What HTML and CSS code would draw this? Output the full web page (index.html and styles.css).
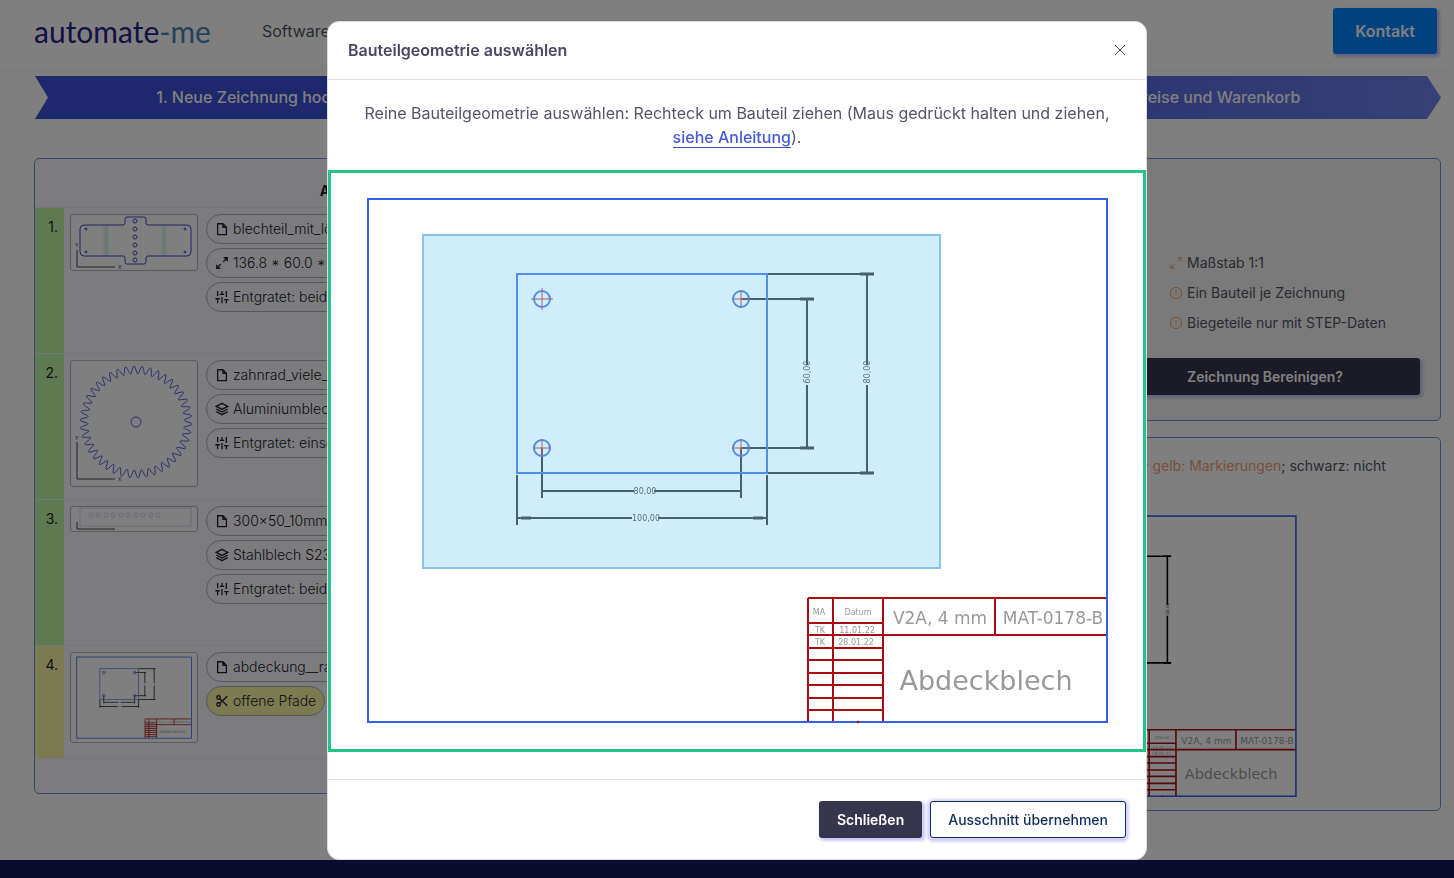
FILE: index.html
```
<!DOCTYPE html>
<html lang="de">
<head>
  <meta charset="UTF-8" />
  <meta name="viewport" content="width=device-width, initial-scale=1.0" />
  <title>automate-me</title>
  <link rel="stylesheet" href="styles.css">
</head>
<body>
  <!-- shared icons -->
  <svg class="sprite" aria-hidden="true">
    <symbol id="icon-file" viewBox="0 0 16 16">
      <path d="M3 2h6l4 4v8.500H3z M9 2v4h4" />
    </symbol>
    <symbol id="icon-expand" viewBox="0 0 16 16">
      <path d="M10 2h4v4 M14 2L9.500 6.500 M6 14H2v-4 M2 14L6.500 9.500" />
    </symbol>
    <symbol id="icon-layers" viewBox="0 0 16 16">
      <path d="M8 1.500L14.500 5 8 8.500 1.500 5z M1.500 8L8 11.500 14.500 8 M1.500 11L8 14.500 14.500 11" />
    </symbol>
    <symbol id="icon-sliders" viewBox="0 0 16 16">
      <path d="M3 15v-5 M3 7V1 M8 15V8 M8 5V1 M13 15v-4 M13 8V1 M0.500 10h5 M5.500 5h5 M10.500 11h5" />
    </symbol>
    <symbol id="icon-scissors" viewBox="0 0 16 16">
      <circle cx="4" cy="4" r="2" /><circle cx="4" cy="12" r="2" />
      <path d="M5.500 5.500L14 13.500 M5.500 10.500L14 2.500" />
    </symbol>
    <symbol id="icon-alert" viewBox="0 0 16 16">
      <circle cx="8" cy="8" r="6.500" />
      <path d="M8 4.500v4 M8 10.500v1" />
    </symbol>
  </svg>

  <header class="site-header">
    <a class="logo" href="#">automate<span>-me</span></a>
    <nav><a href="#">Software</a></nav>
    <button class="btn btn-contact" type="button">Kontakt</button>
  </header>

  <main>
    <ol class="steps">
      <li>1. Neue Zeichnung hochladen</li>
      <li>2. Konfigurieren</li>
      <li>3. Preise und Warenkorb</li>
    </ol>

    <div class="columns">
      <section class="card parts">
        <table>
          <thead>
            <tr><th colspan="3">Aktuelle Bestellung</th></tr>
          </thead>
          <tbody>
            <tr>
              <td class="num">1.</td>
              <td class="thumb">
                <svg viewBox="0 0 126 55">
                  <path class="bend" d="M35 10v31 M93 10v31" />
                  <path class="outline" d="M13 10H52Q54 10 54 8V4Q54 2 56 2H73Q75 2 75 4V8Q75 10 77 10H116Q120 10 120 14V37Q120 41 116 41H77Q75 41 75 43V47Q75 49 73 49H56Q54 49 54 47V43Q54 41 52 41H13Q9 41 9 37V14Q9 10 13 10z" />
                  <g class="outline">
                    <circle cx="15" cy="14" r="1" /><circle cx="15" cy="37" r="1" />
                    <circle cx="114" cy="14" r="1" /><circle cx="114" cy="37" r="1" />
                    <circle cx="64" cy="6" r="2" /><circle cx="64" cy="14" r="2" /><circle cx="64" cy="22" r="2" />
                    <circle cx="64" cy="30" r="2" /><circle cx="64" cy="38" r="2" /><circle cx="64" cy="45" r="2" />
                  </g>
                  <path class="axis" d="M6 35V52H44" />
                  <text x="4" y="32">Y</text><text x="47" y="54">X</text>
                </svg>
              </td>
              <td>
                <ul class="badges">
                  <li><svg><use href="#icon-file" /></svg>blechteil_mit_löchern.step</li>
                  <li><svg><use href="#icon-expand" /></svg>136.8 * 60.0 * 2.0 mm</li>
                  <li><svg><use href="#icon-sliders" /></svg>Entgratet: beidseitig</li>
                </ul>
              </td>
            </tr>
            <tr>
              <td class="num">2.</td>
              <td class="thumb">
                <svg viewBox="0 0 126 125">
                  <path class="gear" id="gear" />
                  <circle class="gear" cx="65" cy="61" r="5" />
                  <path class="axis" d="M6 81V118H44" />
                  <text x="4" y="79">Y</text><text x="47" y="120">X</text>
                </svg>
              </td>
              <td>
                <ul class="badges">
                  <li><svg><use href="#icon-file" /></svg>zahnrad_viele_zaehne.dxf</li>
                  <li><svg><use href="#icon-layers" /></svg>Aluminiumblech</li>
                  <li><svg><use href="#icon-sliders" /></svg>Entgratet: einseitig</li>
                </ul>
              </td>
            </tr>
            <tr>
              <td class="num">3.</td>
              <td class="thumb">
                <svg viewBox="0 0 126 24">
                  <rect class="pale" x="9" y="1" width="111" height="18" />
                  <g class="pale">
                    <circle cx="20" cy="8" r="2" /><circle cx="27" cy="8" r="2" /><circle cx="35" cy="8" r="2" />
                    <circle cx="42" cy="8" r="2" /><circle cx="50" cy="8" r="2" /><circle cx="57" cy="8" r="2" />
                    <circle cx="65" cy="8" r="2" /><circle cx="72" cy="8" r="2" /><circle cx="80" cy="8" r="2" />
                    <circle cx="87" cy="8" r="2" />
                  </g>
                  <path class="axis" d="M6 15V22H44" />
                </svg>
              </td>
              <td>
                <ul class="badges">
                  <li><svg><use href="#icon-file" /></svg>300×50_10mm.dxf</li>
                  <li><svg><use href="#icon-layers" /></svg>Stahlblech S235</li>
                  <li><svg><use href="#icon-sliders" /></svg>Entgratet: beidseitig</li>
                </ul>
              </td>
            </tr>
            <tr class="open">
              <td class="num">4.</td>
              <td class="thumb">
                <svg viewBox="-37 -26 812 575"><use href="#drawing" /></svg>
              </td>
              <td>
                <ul class="badges">
                  <li><svg><use href="#icon-file" /></svg>abdeckung__rahmen.dxf</li>
                  <li class="warn"><svg><use href="#icon-scissors" /></svg>offene Pfade</li>
                </ul>
              </td>
            </tr>
          </tbody>
        </table>
      </section>

      <div class="side">
        <section class="card hints">
          <ul>
            <li><svg><use href="#icon-expand" /></svg>Maßstab 1:1</li>
            <li><svg><use href="#icon-alert" /></svg>Ein Bauteil je Zeichnung</li>
            <li><svg><use href="#icon-alert" /></svg>Biegeteile nur mit STEP-Daten</li>
          </ul>
          <button class="btn btn-dark" type="button">Zeichnung Bereinigen?</button>
        </section>
        <section class="card preview">
          <p>blau: äußere und innere Schneidkontur; rot: Gravur; <span>gelb: Markierungen</span>; schwarz: nicht<br>erkannt</p>
          <svg viewBox="-2 -2 743 527"><use href="#drawing" /></svg>
        </section>
      </div>
    </div>
  </main>

  <footer class="site-footer"></footer>

  <div class="backdrop">
    <div class="modal" role="dialog" aria-labelledby="modal-title">
      <div class="modal-header">
        <h2 id="modal-title">Bauteilgeometrie auswählen</h2>
        <button class="close" type="button" aria-label="Schließen">
          <svg viewBox="0 0 12 12"><path d="M1 1l10 10 M11 1L1 11" /></svg>
        </button>
      </div>
      <div class="modal-body">
        <p>Reine Bauteilgeometrie auswählen: Rechteck um Bauteil ziehen (Maus gedrückt halten und ziehen, <a href="#">siehe Anleitung</a>).</p>
        <div class="canvas">
          <svg viewBox="-37 -26 812 576">
            <g id="drawing">
              <g class="dim">
                <path d="M373 100H446 M373 249H446 M439 100V166 M439 186V249" />
                <path d="M399 75H506 M399 274H506 M499 75V166 M499 186V274" />
                <path d="M174 249V299 M373 249V299 M174 292H266 M286 292H373" />
                <path d="M149 276V326 M399 276V326 M149 319H264 M290 319H399" />
                <path class="dim-bold" d="M432 100H446 M432 249H446 M492 75H506 M492 274H506 M153 319H163 M385 319H395" />
                <text x="277" y="295">80,00</text>
                <text x="278" y="322">100,00</text>
                <text transform="translate(442 173) rotate(-90)">60,00</text>
                <text transform="translate(502 173) rotate(-90)">80,00</text>
              </g>
              <g class="part">
                <rect x="149" y="75" width="250" height="199" />
                <circle cx="174" cy="100" r="8" />
                <circle cx="373" cy="100" r="8" />
                <circle cx="174" cy="249" r="8" />
                <circle cx="373" cy="249" r="8" />
              </g>
              <path class="cross" d="M163 100H185 M174 89V111 M364 100H382 M373 91V109 M165 249H183 M174 240V258 M364 249H382 M373 240V258" />
              <path class="title-grid" d="M440 399H739 M440 424H515 M440 436H739 M440 449H515 M440 461H515 M440 474H515 M440 486H515 M440 499H515 M440 511H515 M440 399V523 M465 399V523 M515 399V523 M627 399V436" />
              <rect class="frame" x="0" y="0" width="739" height="523" />
              <circle class="dot" cx="490" cy="523" r="1" />
              <g class="notes">
                <text x="451" y="416">MA</text>
                <text x="490" y="416">Datum</text>
                <text x="452" y="434">TK</text>
                <text x="489" y="434">11.01.22</text>
                <text x="452" y="446">TK</text>
                <text x="488" y="446">28.01.22</text>
                <text class="medium" x="572" y="425">V2A, 4 mm</text>
                <text class="medium" x="685" y="425">MAT-0178-B</text>
                <text class="large" x="618" y="491">Abdeckblech</text>
              </g>
            </g>
            <rect class="selection" x="55" y="36" width="517" height="333" />
          </svg>
        </div>
      </div>
      <div class="modal-footer">
        <button class="btn btn-dark" type="button">Schließen</button>
        <button class="btn btn-outline" type="button">Ausschnitt übernehmen</button>
      </div>
    </div>
  </div>

  <script src="script.js"></script>
</body>
</html>
```
FILE: styles.css
```
* {
  box-sizing: border-box;
}

body {
  margin: 0;
  min-height: 100vh;
  display: flex;
  flex-direction: column;
  font-family: Inter, "Liberation Sans", sans-serif;
  font-size: 16px;
  line-height: 24px;
  color: #555468;
  background-color: #fff;
}

ul, ol {
  list-style: none;
  margin: 0;
  padding: 0;
}

a {
  color: inherit;
  text-decoration: none;
}

svg {
  display: block;
  fill: none;
  stroke: currentColor;
}

.sprite {
  position: absolute;
  width: 0;
  height: 0;
}

.btn {
  font-family: inherit;
  font-size: 14px;
  font-weight: 600;
  line-height: 19px;
  padding: 8px 17px;
  border: 1px solid transparent;
  border-radius: 3px;
  cursor: pointer;
  box-shadow: 2px 2px 3px 1px #c9c8f8;
}

.btn-dark {
  background-color: #37344e;
  color: #fff;
}

.btn-outline {
  background-color: #fff;
  border-color: #0f2c5c;
  color: #0f2c5c;
  font-weight: 500;
  box-shadow: 0 1px 3px 3px #d2d1fb;
}

/* header */
.site-header {
  display: flex;
  align-items: center;
  height: 71px;
  padding: 0 17px 10px 34px;
  box-shadow: 0 1px 3px rgba(0, 0, 0, 0.06);
}

.logo {
  font-family: Lato, sans-serif;
  font-size: 30px;
  font-weight: 400;
  color: #24248a;
}

.logo span {
  color: #4a83b5;
}

.site-header nav {
  flex: 1;
  margin-left: 51px;
}

.btn-contact {
  background-color: #0083ff;
  color: #fff;
  font-size: 16px;
  line-height: 24px;
  padding: 10px 21px;
}

/* steps */
main {
  padding: 5px 13px 49px 34px;
}

.steps {
  display: flex;
  margin: 0 0 39px 1px;
  color: #fff;
  font-weight: 500;
  line-height: 43px;
  text-align: center;
  background: linear-gradient(90deg, #3c50d8 50%, #6f82ec);
  clip-path: polygon(0 0, calc(100% - 14px) 0, 100% 50%, calc(100% - 14px) 100%, 0 100%, 13px 50%);
}

.steps li {
  flex: 1;
}

/* cards */
.columns {
  display: grid;
  grid-template-columns: 704fr 687fr;
  align-items: start;
  gap: 16px;
}

.card {
  border: 1px solid #6f8fd8;
  border-radius: 5px;
}

.parts {
  background-color: #f9f9ff;
  padding-bottom: 34px;
}

.parts table {
  width: 100%;
  border-collapse: collapse;
  font-size: 14px;
  color: #22222c;
}

.parts th {
  height: 48px;
  padding-top: 18px;
}

.parts td {
  height: 146px;
  padding: 6px 4px;
  vertical-align: top;
  border-top: 1px solid #ececf4;
}

.parts .open td {
  height: 113px;
  border-bottom: 1px solid #ececf4;
}

.parts .num {
  width: 29px;
  text-align: right;
  padding-top: 7px;
  padding-right: 6px;
  background-color: #bdf5a5;
}

.parts .open .num {
  background-color: #f8f5a0;
}

.parts .thumb {
  width: 138px;
  padding-left: 6px;
}

.thumb svg {
  --line: 5;
  width: 128px;
  border: 1px solid #b5b8bc;
  border-radius: 3px;
  background-color: #fff;
}

.thumb text {
  font-size: 5px;
  stroke: none;
  fill: #333;
}

.outline {
  stroke: #4444cc;
}

.gear {
  stroke: #5a5ae0;
}

.bend {
  stroke: #ddf5ee;
  stroke-width: 5;
}

.pale {
  stroke: #d5d8f0;
}

.axis {
  stroke: #444;
}

.badges {
  display: flex;
  flex-direction: column;
  align-items: flex-start;
  gap: 4px;
  font-weight: 300;
}

.badges li {
  display: flex;
  align-items: center;
  gap: 4px;
  height: 30px;
  padding: 0 8px;
  border: 1px solid #a9b0b8;
  border-radius: 15px;
}

.badges svg {
  width: 14px;
  height: 14px;
  stroke-width: 1.5;
}

.badges .warn {
  background-color: #f8f5a0;
}

.side {
  display: grid;
  gap: 16px;
}

.hints {
  display: flex;
  flex-direction: column;
  align-items: flex-end;
  justify-content: flex-end;
  min-height: 263px;
  padding: 0 20px 25px;
  font-size: 14px;
  background-color: #f4f4f5;
}

.hints ul {
  width: 310px;
  padding-left: 59px;
  line-height: 30px;
}

.hints li {
  display: flex;
  align-items: center;
  gap: 4px;
}

.hints li svg {
  width: 14px;
  height: 14px;
  color: #f0a060;
}

.hints .btn {
  width: 310px;
  margin-top: 20px;
}

.preview {
  padding: 16px 16px 13px;
  text-align: center;
  font-size: 14px;
}

.preview p {
  margin: 0 0 13px;
}

.preview span {
  color: #f0a070;
}

.preview svg {
  --line: 3;
  width: 398px;
  margin: 0 auto;
  color: #000;
}

.site-footer {
  flex: 1;
  background-color: #121a56;
}

/* drawing */
.dim, .title-grid {
  stroke-width: var(--line, 2);
}

.dim-bold {
  stroke-width: 3;
}

.frame, .part {
  stroke: #3560e8;
  stroke-width: var(--line, 2);
}

.canvas .part {
  stroke: #6088f0;
}

.cross {
  stroke: #d05050;
  stroke-width: 1;
}

.title-grid {
  stroke: #a80c10;
}

.dot {
  stroke: #a80c10;
}

.dim text, .notes text {
  font-family: "DejaVu Sans", sans-serif;
  font-size: 8px;
  stroke: none;
  fill: #999;
  text-anchor: middle;
}

.dim text {
  fill: #666;
}

.notes .medium {
  font-size: 17px;
}

.notes .large {
  font-size: 27px;
}

.selection {
  fill: rgba(16, 165, 232, 0.2);
  stroke: #89c3e9;
  stroke-width: 2;
}

/* modal */
.backdrop {
  position: fixed;
  inset: 0;
  display: flex;
  align-items: flex-start;
  justify-content: center;
  padding: 21px 0 0 20px;
  background-color: rgba(0, 0, 0, 0.5);
}

.modal {
  width: 820px;
  max-width: 100%;
  background-color: #fff;
  border: 1px solid #dcdce0;
  border-radius: 12px;
}

.modal-header {
  display: flex;
  align-items: center;
  justify-content: space-between;
  padding: 16px 20px 17px;
  border-bottom: 1px solid #e4e5ea;
}

.modal-header h2 {
  margin: 0;
  font-size: 16px;
  font-weight: 600;
  color: #4a4860;
}

.close {
  padding: 0;
  border: 0;
  background: none;
  color: #444;
}

.close svg {
  width: 12px;
  height: 12px;
}

.modal-body {
  padding: 21px 0 27px;
}

.modal-body p {
  margin: 0;
  padding: 0 20px;
  text-align: center;
}

.modal-body a {
  color: #465bd8;
  font-weight: 500;
  border-bottom: 1px solid #3a55b0;
}

.canvas {
  margin-top: 21px;
  border: 3px solid #22c585;
}

.canvas svg {
  width: 100%;
  color: #505050;
}

.modal-footer {
  display: flex;
  justify-content: flex-end;
  gap: 8px;
  padding: 21px 20px;
  border-top: 1px solid #e4e5ea;
}
```
FILE: script.js
```
const teeth = 42;
const steps = teeth * 12;
let d = "";

for (let i = 0; i <= steps; i++) {
  const angle = (i / steps) * Math.PI * 2;
  const r = 52 + 4 * Math.sin(angle * teeth);
  const x = 65 + r * Math.cos(angle);
  const y = 61 + r * Math.sin(angle);
  d += (i ? "L" : "M") + x.toFixed(1) + " " + y.toFixed(1);
}

document.getElementById("gear").setAttribute("d", d + "z");
```
